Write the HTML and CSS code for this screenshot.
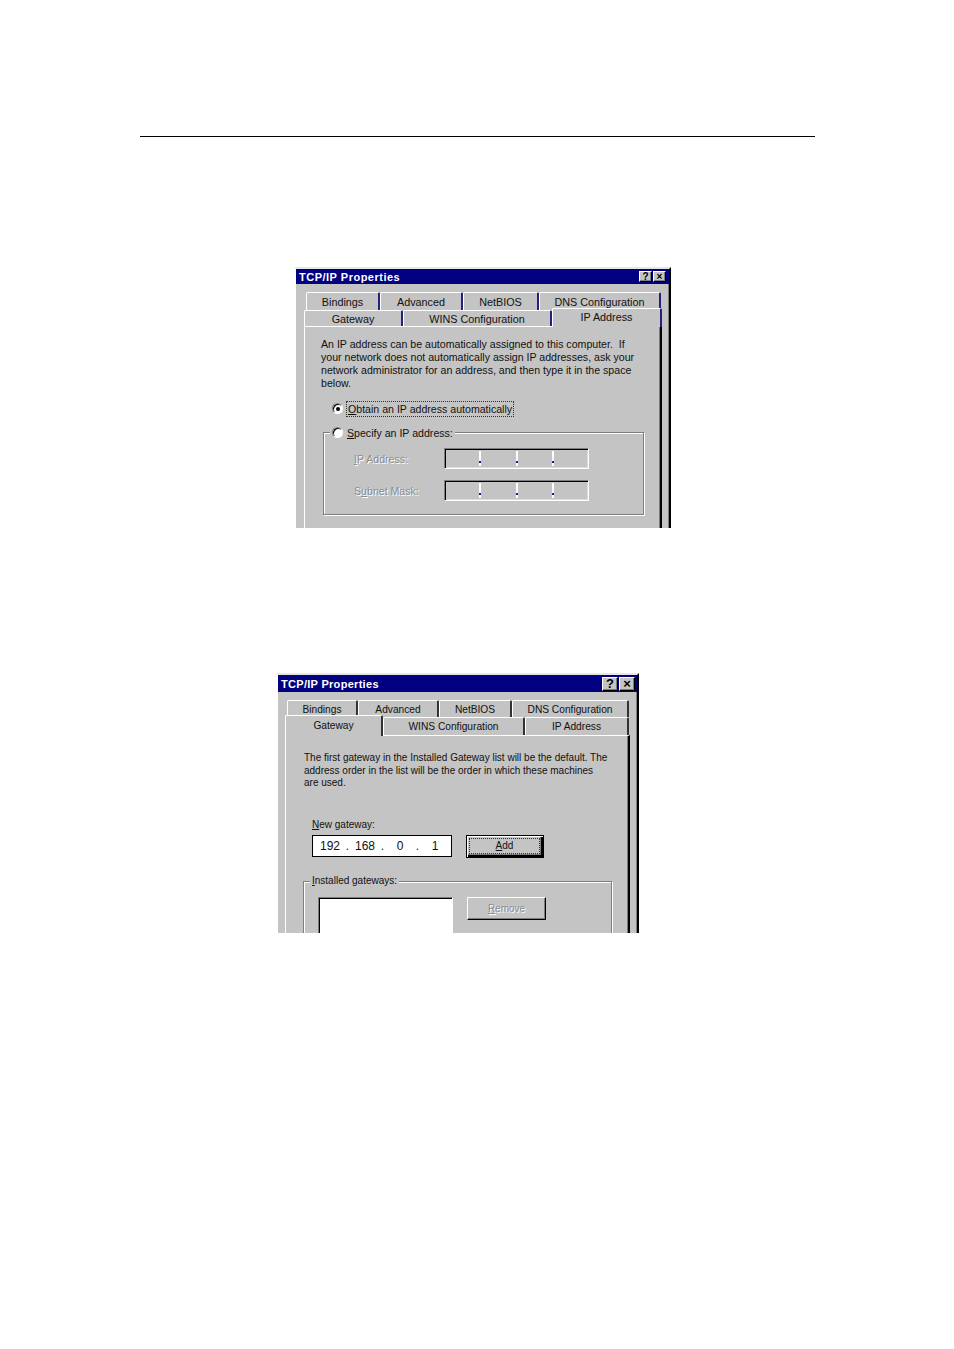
FILE: index.html
```html
<!DOCTYPE html>
<html>
<head>
<meta charset="utf-8">
<link rel="stylesheet" href="styles.css">
</head>
<body>
<div class="page">
  <div class="rule"></div>

  <div class="dlg d1">
    <div class="title">
      <span class="title-text">TCP/IP Properties</span>
      <span class="tbtns"><span class="tb">?</span><span class="tb">×</span></span>
    </div>
    <div class="tabs">
      <div class="row r1">
        <div class="tab t-bind">Bindings</div>
        <div class="tab t-adv">Advanced</div>
        <div class="tab t-nb">NetBIOS</div>
        <div class="tab t-dns">DNS Configuration</div>
      </div>
      <div class="row r2">
        <div class="tab t-gw">Gateway</div>
        <div class="tab t-wins">WINS Configuration</div>
        <div class="tab t-ip sel">IP Address</div>
      </div>
    </div>
    <div class="panel">
      <p class="para">An IP address can be automatically assigned to this computer.&nbsp; If<br>your network does not automatically assign IP addresses, ask your<br>network administrator for an address, and then type it in the space<br>below.</p>
      <div class="opt opt1">
        <span class="radio on"></span>
        <span class="focus"><u>O</u>btain an IP address automatically</span>
      </div>
      <div class="group g1">
        <div class="legend opt"><span class="radio"></span><span><u>S</u>pecify an IP address:</span></div>
        <div class="iprow">
          <span class="dis lbl"><u>I</u>P Address:</span>
          <span class="ipbox"><span class="seg"></span><span class="sep"></span><span class="seg"></span><span class="sep"></span><span class="seg"></span><span class="sep"></span><span class="seg"></span></span>
        </div>
        <div class="iprow">
          <span class="dis lbl">S<u>u</u>bnet Mask:</span>
          <span class="ipbox"><span class="seg"></span><span class="sep"></span><span class="seg"></span><span class="sep"></span><span class="seg"></span><span class="sep"></span><span class="seg"></span></span>
        </div>
      </div>
    </div>
  </div>

  <div class="dlg d2">
    <div class="title">
      <span class="title-text">TCP/IP Properties</span>
      <span class="tbtns"><span class="tb">?</span><span class="tb">×</span></span>
    </div>
    <div class="tabs">
      <div class="row r1">
        <div class="tab t-bind">Bindings</div>
        <div class="tab t-adv">Advanced</div>
        <div class="tab t-nb">NetBIOS</div>
        <div class="tab t-dns">DNS Configuration</div>
      </div>
      <div class="row r2">
        <div class="tab t-gw sel">Gateway</div>
        <div class="tab t-wins">WINS Configuration</div>
        <div class="tab t-ip">IP Address</div>
      </div>
    </div>
    <div class="panel">
      <p class="para">The first gateway in the Installed Gateway list will be the default. The<br>address order in the list will be the order in which these machines<br>are used.</p>
      <div class="newgw"><u>N</u>ew gateway:</div>
      <div class="gwrow">
        <span class="gwinput"><span class="num">192</span><span class="dot">.</span><span class="num">168</span><span class="dot">.</span><span class="num">0</span><span class="dot">.</span><span class="num">1</span></span>
        <span class="btn def"><span class="btn-in"><u>A</u>dd</span></span>
      </div>
      <div class="group g2">
        <div class="legend lg2"><u>I</u>nstalled gateways:</div>
        <div class="listrow">
          <span class="listbox"></span>
          <span class="btn dbtn"><span class="dis"><u>R</u>emove</span></span>
        </div>
      </div>
    </div>
  </div>
</div>
</body>
</html>
```

FILE: styles.css
```css
* { box-sizing: border-box; }
html, body { margin: 0; padding: 0; background: #fff; }
body { font-family: "Liberation Sans", Arial, sans-serif; color: #111; }
.page { width: 954px; height: 1349px; overflow: hidden; padding-top: 136px; }
.rule { margin-left: 140px; width: 675px; height: 0; border-top: 1px solid #000; }

.dlg {
  background: #c4c4c4;
  overflow: hidden;
  border-style: solid;
  border-width: 2px 2px 0 2px;
  border-color: #e6e6e6 #000 #000 #fff;
  box-shadow: inset -1px 0 #7e7e7e;
}
.d1 { margin-left: 294px; margin-top: 130px; width: 377px; height: 261px; }
.d2 { margin-left: 276px; margin-top: 145px; width: 363px; height: 260px; }

.title {
  background: #000080;
  color: #fff;
  display: flex;
  align-items: center;
  justify-content: space-between;
  padding-left: 3px;
  font-weight: bold;
  font-size: 11px;
}
.title-text { letter-spacing: 0.5px; }
.d1 .title { height: 15px; padding-right: 3px; }
.d2 .title { height: 17px; padding-right: 2px; }
.d2 .title-text { letter-spacing: 0.3px; }
.tbtns { display: flex; gap: 1px; }
.tb {
  background: #c4c4c4;
  color: #000;
  display: flex;
  align-items: center;
  justify-content: center;
  border-style: solid;
  border-width: 1px;
  border-color: #fff #000 #000 #fff;
  box-shadow: inset -1px -1px #7e7e7e;
  font-weight: bold;
}
.d1 .tb { width: 13px; height: 11px; font-size: 10px; }
.d2 .tb { width: 16px; height: 14px; font-size: 13px; }

.tabs { margin-top: 8px; }
.row { display: flex; }
.tab {
  display: flex;
  align-items: center;
  justify-content: center;
  border-style: solid;
  border-width: 1px 2px 0 1px;
  border-color: #fff #22227a #000 #fff;
  border-radius: 2px 2px 0 0;
  white-space: nowrap;
}
.d1 .tab { font-size: 10.8px; }
.d2 .tab { font-size: 10.2px; border-right-color: #333; }

.d1 .r1 { margin-left: 10px; height: 18px; }
.d1 .r2 { margin-left: 8px; height: 16px; }
.d2 .r1 { margin-left: 9px; height: 17px; }
.d2 .r2 { margin-left: 7px; height: 18px; }

.d1 .t-bind { width: 74px; }
.d1 .t-adv { width: 83px; }
.d1 .t-nb { width: 76px; }
.d1 .t-dns { width: 122px; }
.d1 .t-gw { width: 99px; }
.d1 .t-wins { width: 149px; }
.d1 .t-ip { width: 110px; }

.d2 .t-bind { width: 71px; }
.d2 .t-adv { width: 81px; }
.d2 .t-nb { width: 73px; }
.d2 .t-dns { width: 117px; }
.d2 .t-gw { width: 98px; }
.d2 .t-wins { width: 142px; }
.d2 .t-ip { width: 104px; }

.tab.sel {
  position: relative;
  z-index: 1;
  background: #c4c4c4;
  margin-top: -2px;
  margin-bottom: -1px;
  height: calc(100% + 3px);
  padding-bottom: 2px;
}

.panel {
  border-style: solid;
  border-width: 1px 2px 0 1px;
  border-color: #fff #000 #000 #fff;
  box-shadow: inset -1px 0 #7e7e7e;
  height: 300px;
}
.d1 .panel { margin-left: 8px; width: 358px; padding: 11px 0 0 16px; }
.d2 .panel { margin-left: 7px; width: 345px; padding: 16px 0 0 18px; }

.para { margin: 0; white-space: nowrap; }
.d1 .para { font-size: 10.6px; line-height: 13px; }
.d2 .para { font-size: 10px; line-height: 12.5px; }

.opt { display: flex; align-items: center; gap: 4px; font-size: 10.6px; height: 15px; }
.opt1 { margin-top: 11px; margin-left: 11px; }
.focus { outline: 1px dotted #333; outline-offset: 0; padding: 0 1px; line-height: 14px; }

.radio {
  width: 11px; height: 11px; border-radius: 50%;
  background: #fff;
  border: 1px solid;
  border-color: #7e7e7e #fff #fff #7e7e7e;
  box-shadow: inset 1px 1px #000;
  position: relative;
  flex: none;
}
.radio.on::after {
  content: ""; position: absolute; left: 2.5px; top: 2.5px;
  width: 4px; height: 4px; border-radius: 50%; background: #000;
}

.group {
  position: relative;
  border: 1px solid #7e7e7e;
  box-shadow: inset 1px 1px #fff, 1px 1px #fff;
}
.g1 { margin-top: 16px; margin-left: 2px; width: 321px; height: 83px; padding-top: 15px; }
.legend {
  position: absolute;
  background: #c4c4c4;
}
.g1 .legend { left: 6px; top: -8px; padding: 0 2px 0 2px; }

.iprow { display: flex; align-items: center; height: 21px; margin-bottom: 11px; }
.lbl { width: 90px; margin-left: 30px; font-size: 10.6px; }
.dis { color: #8c8c8c; text-shadow: 1px 1px 0 #fff; }
.ipbox {
  display: flex;
  align-items: stretch;
  width: 145px; height: 21px;
  border: 1px solid;
  border-color: #7e7e7e #fff #fff #7e7e7e;
  box-shadow: inset 1px 1px #000, inset -1px -1px #dcdcdc;
  padding: 2px 0;
}
.seg { width: 34.5px; }
.sep { width: 2px; background: #fff; position: relative; }
.sep::after { content: ""; position: absolute; left: 0; bottom: 3px; width: 2px; height: 2px; background: #1a1a8a; }

.newgw { font-size: 10px; line-height: 12px; margin-top: 29px; margin-left: 8px; }
.gwrow { display: flex; gap: 14px; margin-top: 4px; margin-left: 8px; }
.gwinput {
  display: flex; align-items: center;
  width: 140px; height: 22px;
  background: #fff;
  border: 1px solid #000;
  padding-left: 3px;
  font-size: 12px;
}
.num { width: 28px; text-align: center; }
.dot { width: 7px; text-align: center; }
.btn {
  display: flex; align-items: center; justify-content: center;
  font-size: 10px;
  border-style: solid;
  border-width: 1px;
  border-color: #fff #000 #000 #fff;
  box-shadow: inset -1px -1px #7e7e7e;
}
.btn.def {
  width: 78px; height: 23px;
  border: 1px solid #000;
  box-shadow: inset 1px 1px #fff, inset -2px -2px #000, inset -3px -3px #7e7e7e;
  padding: 3px 4px 4px 3px;
}
.btn-in { flex: 1; align-self: stretch; display: flex; align-items: center; justify-content: center; outline: 1px dotted #333; }
.dbtn { width: 79px; height: 23px; }

.g2 { margin-top: 23px; margin-left: -1px; width: 309px; height: 80px; padding-top: 15px; padding-left: 14px; }
.lg2 { left: 6px; top: -7px; padding: 0 2px; font-size: 10px; line-height: 12px; }
.listrow { display: flex; gap: 14px; }
.listbox {
  width: 135px; height: 60px;
  background: #fff;
  border: 1px solid;
  border-color: #7e7e7e #fff #fff #7e7e7e;
  box-shadow: inset 1px 1px #000;
}
```
